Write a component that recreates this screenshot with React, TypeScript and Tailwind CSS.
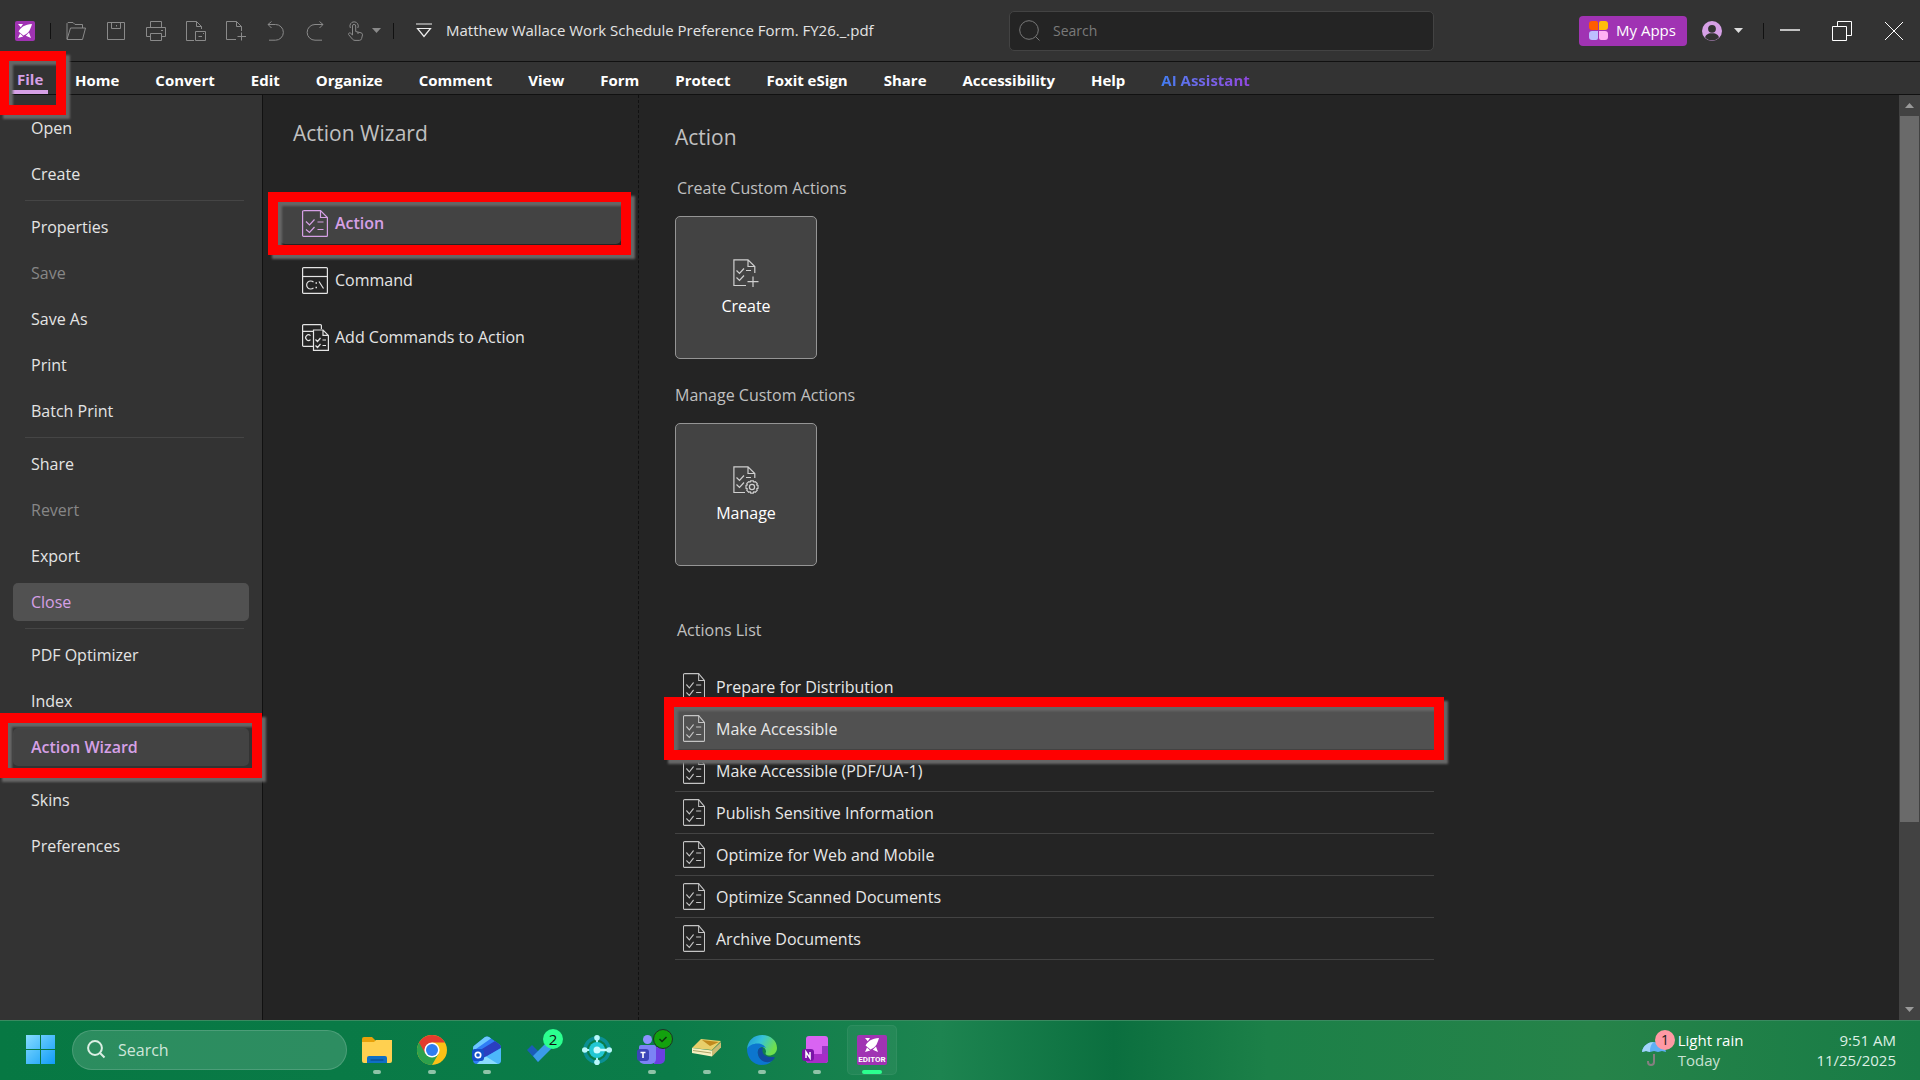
import type { ReactNode } from "react";
import clsx from "clsx";

type MenuItem = { label: string; disabled?: boolean; hovered?: boolean; active?: boolean };

const TABS = [
  "Home",
  "Convert",
  "Edit",
  "Organize",
  "Comment",
  "View",
  "Form",
  "Protect",
  "Foxit eSign",
  "Share",
  "Accessibility",
  "Help",
];

const FILE_MENU: MenuItem[][] = [
  [{ label: "Open" }, { label: "Create" }],
  [
    { label: "Properties" },
    { label: "Save", disabled: true },
    { label: "Save As" },
    { label: "Print" },
    { label: "Batch Print" },
  ],
  [
    { label: "Share" },
    { label: "Revert", disabled: true },
    { label: "Export" },
    { label: "Close", hovered: true },
  ],
  [{ label: "PDF Optimizer" }, { label: "Index" }, { label: "Action Wizard", active: true }],
  [{ label: "Skins" }, { label: "Preferences" }],
];

const ACTIONS = [
  "Prepare for Distribution",
  "Make Accessible",
  "Make Accessible (PDF/UA-1)",
  "Publish Sensitive Information",
  "Optimize for Web and Mobile",
  "Optimize Scanned Documents",
  "Archive Documents",
];

// Red callout frame laid over the thing it points at
function Callout({ className }: { className: string }) {
  return (
    <span
      aria-hidden
      className={clsx(
        "pointer-events-none absolute z-20 border-[10px] border-[#ff0000] drop-shadow-[4px_4px_1px_#666666]",
        className,
      )}
    />
  );
}

function Line({ w = 20, h = 20, sw = 1, className, children }: { w?: number; h?: number; sw?: number; className?: string; children: ReactNode }) {
  return (
    <svg width={w} height={h} viewBox={`0 0 ${w} ${h}`} fill="none" stroke="currentColor" strokeWidth={sw} className={clsx("shrink-0", className)}>
      {children}
    </svg>
  );
}

/* ---------- line icons ---------- */

function ChecklistIcon({ narrow }: { narrow?: boolean }) {
  return (
    <svg
      width={narrow ? 22 : 26}
      height="27"
      viewBox="0 0 26 27"
      preserveAspectRatio="none"
      fill="none"
      stroke="currentColor"
      strokeWidth="1.2"
      className="shrink-0"
    >
      <path d="M1.5 .6H18.5L25.4 7.5V25.4a1 1 0 0 1-1 1H1.6a1 1 0 0 1-1-1V1.6a1 1 0 0 1 1-1Z" />
      <path d="M18.5 .6V7.5H25.4" />
      <path d="M4 11.5 7.5 15 12.5 9.5M4 19.5 7.5 22.5 12.5 17M15.5 12H21.5M15.5 19.5H21.5" />
    </svg>
  );
}

function CommandIcon() {
  return (
    <Line w={26} h={27} sw={1.2}>
      <rect x=".6" y=".6" width="24.8" height="25.8" rx="1" />
      <path d="M.6 9.5H25.4" />
      <path d="M11.5 15.2A4 4 0 1 0 11.5 20.8M17 14.5 21.5 21.5" />
      <path d="M13.5 16H15M13.5 20.5H15" strokeWidth="1.6" />
    </Line>
  );
}

function AddCommandIcon() {
  return (
    <Line w={27} h={27} sw={1.2}>
      <path d="M11 22.4H1.6a1 1 0 0 1-1-1V1.6a1 1 0 0 1 1-1H18.4a1 1 0 0 1 1 1V5M.6 7.4H11" />
      <path d="M8.5 11.6A2.8 2.8 0 1 0 8.5 15.6" />
      <path d="M11.5 6H21L26.4 11.4V26.4H11.5ZM21 6V11.4H26.4" />
      <path d="M13.5 15.5 15.5 17.5 18.5 14M13.5 21.5 15.5 23.5 18.5 20M20.5 16H24M20.5 21.5H24" />
    </Line>
  );
}

function CreateActionIcon() {
  return (
    <Line w={26} h={28} sw={1.2}>
      <path d="M13 26.5H.9V.9H15L21.8 7.5V14M15 .9V7.5H21.8" />
      <path d="M3.5 11.5 6.5 14.5 11 9.5M3.5 18.5 6.5 21.5 11 16.5M13 11.5H18M20 17.5V28M14.5 22.7H25.5" />
    </Line>
  );
}

function ManageActionIcon() {
  return (
    <Line w={26} h={28} sw={1.2}>
      <path d="M12 26.5H.9V.9H15L21.8 7.5V12M15 .9V7.5H21.8" />
      <path d="M3.5 11.5 6.5 14.5 11 9.5M3.5 18.5 6.5 21.5 11 16.5M13 11.5H18" />
      <circle cx="19" cy="21" r="2.6" />
      <path d="M17.7 14.8h2.6l.6 1.3 1.4-.5 1.9 1.9-.5 1.4 1.3.6v2.8l-1.3.6.5 1.4-1.9 1.9-1.4-.5-.6 1.4h-2.6l-.6-1.4-1.4.5-1.9-1.9.5-1.4-1.3-.6v-2.8l1.3-.6-.5-1.4 1.9-1.9 1.4.5Z" />
    </Line>
  );
}

function Caret({ className }: { className?: string }) {
  return (
    <svg width="9" height="5" viewBox="0 0 9 5" className={clsx("shrink-0", className)}>
      <path d="M0 0H9L4.5 5Z" fill="currentColor" />
    </svg>
  );
}

function FoxitMark() {
  return (
    <>
      <path d="M17 3C10 3.4 5.4 6.4 3.6 10.6L8.4 14.5C12.6 13 15.3 9.6 17 3Z" fill="#fff" />
      <path d="M3 3H8L5.8 6.2ZM3 17 5 12.6 8.2 15.4ZM10.8 14.7 14 11.6 16 17Z" fill="#fff" />
    </>
  );
}

/* ---------- title bar ---------- */

const QUICK_TOOLS: { name: string; icon: ReactNode }[] = [
  {
    name: "Open file",
    icon: (
      <Line>
        <path d="M1 18V2.5L2 1.5H7L9 3.5H16.5V7M1 18.5 4.5 7H19.5L16.5 18.5Z" />
      </Line>
    ),
  },
  {
    name: "Save file",
    icon: (
      <Line>
        <path d="M1.5 1.5H18.5V18.5H1.5ZM5.5 1.5V7.5H14.5V1.5M10.5 4V5.5" />
      </Line>
    ),
  },
  {
    name: "Print file",
    icon: (
      <Line>
        <path d="M4.5 6V.5H15.5V6M4.5 15.5H.5V6.5H19.5V15.5H15.5M4.5 12.5H15.5V19.5H4.5ZM15 9.5H17" />
      </Line>
    ),
  },
  {
    name: "Page tools",
    icon: (
      <Line>
        <path d="M8 19.5H.5V.5H10.5L15.5 5.5V8M10.5 .5V5.5H15.5M9.5 10.5H19.5V19.5H9.5ZM12.5 15.5H16M17 12.5H18" />
      </Line>
    ),
  },
  {
    name: "New page",
    icon: (
      <Line>
        <path d="M10 18.5H.5V.5H10.5L15.5 5.5V10M10.5 .5V5.5H15.5M15.5 11.5V19.5M11.5 15.5H20" />
      </Line>
    ),
  },
  {
    name: "Undo",
    icon: (
      <Line>
        <path d="M5.5 .5 2 3.5 5.5 7M2 3.5H9.5A7.8 7.8 0 0 1 9.5 19.2H3" />
      </Line>
    ),
  },
  {
    name: "Redo",
    icon: (
      <Line>
        <path d="M13.5 .5 17 3.5 13.5 7M17 3.5H9A7.8 7.8 0 0 0 9 19.2H16" />
      </Line>
    ),
  },
];

function TitleBar() {
  return (
    <header className="flex h-[62px] items-center border-b border-[#111111] bg-[#333333]">
      <svg width="20" height="20" viewBox="0 0 20 20" className="ml-[15px] shrink-0">
        <rect width="20" height="20" rx="2" fill="#a033b3" />
        <FoxitMark />
      </svg>
      <span className="ml-[15px] h-4 w-px bg-[#111111]" />
      <div className="ml-[15px] flex items-center gap-5 text-[#8a8a8a]">
        {QUICK_TOOLS.map((tool) => (
          <button key={tool.name} aria-label={tool.name}>
            {tool.icon}
          </button>
        ))}
        <button aria-label="Hand tool" className="flex items-center gap-[6px]">
          <Line>
            <path d="M6.5 12V5a1.6 1.6 0 0 1 3.2 0V10.5L15 11.8a2 2 0 0 1 1.5 2L15.6 17.6a2.4 2.4 0 0 1-2.3 1.8H9a3 3 0 0 1-2.3-1L2.6 13.6C2 12.5 3.4 11.3 4.6 12.2L6.5 14Z" />
            <path d="M4.4 7A4.2 4.2 0 1 1 11.8 7M12 11V13" />
          </Line>
          <Caret />
        </button>
      </div>
      <span className="ml-3 h-4 w-px bg-[#111111]" />
      <button aria-label="Customize toolbar" className="ml-[22px] text-[#eeeeee]">
        <Line w={16} h={16} sw={1.2}>
          <path d="M0 1H16M1.5 5.5H14.5L8 13.5Z" />
        </Line>
      </button>
      <p className="ml-[14px] text-[15px] whitespace-nowrap text-[#e4e4e4]">
        Matthew Wallace Work Schedule Preference Form. FY26._.pdf
      </p>

      <label className="ml-auto flex h-10 w-[425px] items-center gap-[13px] rounded-[5px] border border-[#434343] bg-[#242424] pl-[9px] text-[#7a7a7a]">
        <Line w={21} h={21}>
          <circle cx="10" cy="10" r="9.3" />
          <path d="M16.5 16.5 20.5 20.5" />
        </Line>
        <input aria-label="Search" placeholder="Search" className="w-full bg-transparent text-[14px] outline-none placeholder:text-[#7a7a7a]" />
      </label>

      <button className="ml-[145px] flex h-[30px] w-[108px] items-center gap-2 rounded-[4px] bg-[#a033b3] pl-[10px] text-[15px] whitespace-nowrap text-white">
        <svg width="19" height="19" viewBox="0 0 19 19" className="shrink-0">
          <path d="M3 0H7a2 2 0 0 1 2 2V9H3A3 3 0 0 1 0 6V3a3 3 0 0 1 3-3Z" fill="#ff5c00" />
          <path d="M12 0h4a3 3 0 0 1 3 3V6a3 3 0 0 1-3 3H10V2a2 2 0 0 1 2-2Z" fill="#ffbd0a" />
          <path d="M3 10H9v7a2 2 0 0 1-2 2H3a3 3 0 0 1-3-3V13a3 3 0 0 1 3-3Z" fill="#bdbdff" />
          <path d="M10 10h6a3 3 0 0 1 3 3v3a3 3 0 0 1-3 3H12a2 2 0 0 1-2-2Z" fill="#ffb0f4" />
        </svg>
        My Apps
      </button>
      <button aria-label="Account" className="ml-[15px] flex items-center gap-3 text-[#dddddd]">
        <svg width="20" height="20" viewBox="0 0 20 20">
          <circle cx="10" cy="10" r="10" fill="#d6a0e6" />
          <circle cx="10" cy="7.8" r="3.9" fill="#333333" />
          <path d="M3 16.2C4.6 12.6 7 12.2 10 12.2S15.4 12.6 17 16.2A9.3 9.3 0 0 1 3 16.2Z" fill="#333333" />
        </svg>
        <Caret />
      </button>
      <span className="ml-5 h-4 w-px bg-[#111111]" />
      <div className="mr-4 ml-4 flex items-center gap-8 text-white">
        <button aria-label="Minimize">
          <Line sw={1.4}>
            <path d="M0 9H20" />
          </Line>
        </button>
        <button aria-label="Restore">
          <Line>
            <path d="M.5 5.5H14.5V19.5H.5ZM5.5 5V.5H19.5V14.5H15" />
          </Line>
        </button>
        <button aria-label="Close window">
          <Line>
            <path d="M1 1 19 19M19 1 1 19" />
          </Line>
        </button>
      </div>
    </header>
  );
}

function MenuBar() {
  return (
    <nav className="flex h-[33px] border-b border-[#111111] bg-[#333333] pt-[7px] pl-[10px] text-[15px] leading-[22px] font-bold whitespace-nowrap text-white">
      <div className="relative">
        <button className="block w-[38px] border-b-4 border-[#d6a0e6] pb-px text-left leading-[20px] text-[#d6a0e6]">
          <span className="pl-[7px]">File</span>
        </button>
        <Callout className="-top-[18px] -left-[11px] h-[64px] w-[67px]" />
      </div>
      <div className="ml-[27px] flex gap-9">
        {TABS.map((tab) => (
          <button key={tab} className="flex">
            {tab}
          </button>
        ))}
        <button className="flex bg-linear-to-r from-[#3f7df0] to-[#9146e0] bg-clip-text text-transparent">AI Assistant</button>
      </div>
    </nav>
  );
}

/* ---------- backstage ---------- */

function FileMenu() {
  return (
    <aside className="w-[263px] shrink-0 border-r border-[#111111] bg-[#333333] pt-[10px]">
      {FILE_MENU.map((group, i) => (
        <ul key={i}>
          {i > 0 && (
            <li aria-hidden className="mr-[18px] ml-[25px] py-[3px]">
              <div className="h-px bg-[#454545]" />
            </li>
          )}
          {group.map((item) => (
            <li key={item.label} className="relative px-[13px] py-1">
              <button
                disabled={item.disabled}
                className={clsx(
                  "h-[38px] w-full rounded-[5px] pl-[18px] text-left text-[16px]",
                  item.disabled && "text-[#878787]",
                  item.hovered && "bg-[#515151] text-[#d6a0e6]",
                  item.active && "bg-[#434343] font-semibold text-[#d6a0e6]",
                )}
              >
                {item.label}
              </button>
              {item.active && <Callout className="-top-[11px] right-0 -bottom-2 -left-[2px]" />}
            </li>
          ))}
        </ul>
      ))}
    </aside>
  );
}

function WizardNav() {
  return (
    <section className="w-[376px] shrink-0 border-r border-dashed border-[#111111] pt-[23px]">
      <h1 className="pl-[30px] text-[21px] leading-[30px] text-[#c0c0c0]">Action Wizard</h1>
      <ul className="mt-[54px] mr-[17px] ml-[17px] flex flex-col gap-[15px] text-[16px]">
        <li className="relative">
          <button className="flex h-[42px] w-full items-center gap-[7px] rounded-[5px] bg-[#434343] pl-[22px] font-semibold text-[#d6a0e6]">
            <ChecklistIcon />
            Action
          </button>
          <Callout className="-top-[10px] -right-[10px] -bottom-[11px] -left-3" />
        </li>
        <li>
          <button className="flex h-[42px] w-full items-center gap-[7px] pl-[22px]">
            <CommandIcon />
            Command
          </button>
        </li>
        <li>
          <button className="flex h-[42px] w-full items-center gap-[6px] pl-[22px]">
            <AddCommandIcon />
            Add Commands to Action
          </button>
        </li>
      </ul>
    </section>
  );
}

function Tile({ icon, label }: { icon: ReactNode; label: string }) {
  return (
    <button className="flex h-[143px] w-[142px] flex-col items-center justify-center gap-2 rounded-[5px] border border-[#959595] bg-[#434343] text-[16px] leading-[22px] text-white">
      <span className="text-[#cfcfcf]">{icon}</span>
      {label}
    </button>
  );
}

function ActionPanel() {
  return (
    <main className="min-w-0 flex-1 pt-[27px] pb-10 pl-9 text-[#c0c0c0]">
      <h2 className="text-[21px] leading-[30px]">Action</h2>
      <h3 className="mt-6 mb-4 pl-[2px] text-[16px] leading-6">Create Custom Actions</h3>
      <Tile icon={<CreateActionIcon />} label="Create" />
      <h3 className="mt-6 mb-4 text-[16px] leading-6">Manage Custom Actions</h3>
      <Tile icon={<ManageActionIcon />} label="Manage" />
      <h3 className="mt-[52px] pl-[2px] text-[16px] leading-6">Actions List</h3>
      <ul className="mt-6 w-[62%] text-[16px] text-[#e8e8e8]">
        {ACTIONS.map((name) => {
          const selected = name === "Make Accessible";
          return (
            <li key={name} className="relative">
              <button
                className={clsx(
                  "flex h-[42px] w-full items-center gap-[11px] border-b border-[#434343] pl-2",
                  selected && "bg-[#515151]",
                )}
              >
                <span className="text-[#c4c4c4]">
                  <ChecklistIcon narrow />
                </span>
                {name}
              </button>
              {selected && <Callout className="-top-[11px] -right-[10px] -bottom-[10px] -left-[11px]" />}
            </li>
          );
        })}
      </ul>
    </main>
  );
}

function ScrollRail() {
  return (
    <div className="flex w-[21px] shrink-0 flex-col bg-[#424242] text-[#9a9a9a]">
      <button aria-label="Scroll up" className="flex h-[21px] items-center justify-center">
        <Caret className="rotate-180" />
      </button>
      <div className="flex-1">
        <div className="mx-px h-[80%] bg-[#6a6a6a]" />
      </div>
      <button aria-label="Scroll down" className="flex h-[21px] items-center justify-center">
        <Caret />
      </button>
    </div>
  );
}

/* ---------- taskbar ---------- */

function AppButton({ name, running, active, children }: { name: string; running?: boolean; active?: boolean; children: ReactNode }) {
  return (
    <button aria-label={name} className="relative flex h-[57px] w-[55px] items-center justify-center">
      <span className={clsx("flex h-[50px] w-[50px] items-center justify-center rounded-[5px]", active && "border border-white/5 bg-white/5")}>
        <svg width="30" height="30" viewBox="0 0 30 30" className="overflow-visible">
          {children}
        </svg>
      </span>
      {running && <span className={clsx("absolute bottom-1 h-1 rounded-full", active ? "w-5 bg-[#2bff8f]" : "w-2 bg-[#8fc4a8]")} />}
    </button>
  );
}

function TaskApps() {
  return (
    <div className="flex pl-[2px]">
      <AppButton name="File Explorer" running>
        <path d="M0 4a2 2 0 0 1 2-2H10l4 4H28V10H0Z" fill="#e8a10a" />
        <path d="M0 7H12l2-2H30V26a2 2 0 0 1-2 2H2a2 2 0 0 1-2-2Z" fill="#ffd050" />
        <path d="M5 28V23a2 2 0 0 1 2-2H23a2 2 0 0 1 2 2V28Z" fill="#0f6fc5" />
        <path d="M8.5 25H21.5" stroke="#0a4a8c" strokeWidth="1.2" />
      </AppButton>
      <AppButton name="Chrome" running>
        <circle cx="15" cy="15" r="15" fill="#fbc116" />
        <path d="M15 15 2 7.5A15 15 0 0 0 15 30L21.5 18.7Z" fill="#2da14c" />
        <path d="M2 7.5A15 15 0 0 1 28 7.5H15L8.5 18.7Z" fill="#e33b2e" />
        <circle cx="15" cy="15" r="7.6" fill="#fff" />
        <circle cx="15" cy="15" r="6" fill="#2f7df0" />
      </AppButton>
      <AppButton name="Outlook" running>
        <path d="M1 13Q1 11 3 10L13 2Q15 .8 17 2L27 9Q29 10 29 13V25a4 4 0 0 1-4 4H5a4 4 0 0 1-4-4Z" fill="#2f7df5" />
        <path d="M1 13Q1 11 3 10L13 2Q15 .8 17 2L19 3.500 1 16Z" fill="#6cc8ff" />
        <path d="M5 17 23 6 27 9Q29 10 29 13L10 24Z" fill="#2a3fc0" />
        <path d="M10 24 29 13V25a4 4 0 0 1-4 4H5Z" fill="#4db8fa" />
        <path d="M10 24 14 21.500 26 29H5Z" fill="#8adcff" />
        <rect y="14" width="12" height="12" rx="3" fill="#1450c8" />
        <circle cx="6" cy="20" r="2.7" fill="none" stroke="#fff" strokeWidth="1.7" />
      </AppButton>
      <AppButton name="To Do">
        <path d="M0 15 5 10 16 21 11 27Z" fill="#1a5cb8" />
        <path d="M11 27 6 21 22 5 27 11Z" fill="#3b9bea" />
        <circle cx="26" cy="4" r="10" fill="#2bff8f" />
        <text x="26" y="9.500" fontSize="15" textAnchor="middle" fill="#101010">2</text>
      </AppButton>
      <AppButton name="Hub">
        <circle cx="15" cy="15" r="12" fill="none" stroke="#0b8f94" strokeWidth="3.5" />
        <path d="M15 3V27M3 15H27" stroke="#a9f3f5" strokeWidth="2" />
        <circle cx="15" cy="15" r="8" fill="#22c7d3" />
        <circle cx="15" cy="15" r="3.5" fill="#c8fbff" />
        <path d="M15 15H26" stroke="#c8fbff" strokeWidth="2.5" />
        <g fill="#b8f8fb">
          <circle cx="15" cy="2.8" r="2.8" />
          <circle cx="15" cy="27.2" r="2.8" />
          <circle cx="2.8" cy="15" r="2.8" />
          <circle cx="27.2" cy="15" r="2.8" />
        </g>
      </AppButton>
      <AppButton name="Teams" running>
        <circle cx="10.5" cy="4.5" r="4.5" fill="#8d92ff" />
        <path d="M17 12H28V24a5 5 0 0 1-5 5H17Z" fill="#6b3fe0" />
        <path d="M2 12a2 2 0 0 1 2-2H17a2 2 0 0 1 2 2V24a5 5 0 0 1-5 5H7a5 5 0 0 1-5-5Z" fill="#7b83f5" />
        <rect y="14" width="12" height="12" rx="3" fill="#3b45b8" />
        <path d="M3.5 17.5H8.5M6 17.5V23" stroke="#fff" strokeWidth="1.6" />
        <circle cx="26" cy="4" r="9.5" fill="#13a10e" stroke="#1d3325" />
        <path d="M22.5 4 25 6.5 29.5 2" fill="none" stroke="#0b3310" strokeWidth="1.5" />
      </AppButton>
      <AppButton name="Card scanner" running>
        <path d="M0 13 9 4 29 6 20 15Z" fill="#e8cf6a" />
        <path d="M10 5 27 7 18 11Z" fill="#c08a1e" />
        <path d="M0 13 20 15.5V21.5L0 18Z" fill="#f6efc0" />
        <path d="M20 15.5 29 7V12.5L20 21.5Z" fill="#c9ba74" />
        <path d="M1 15.5 19 18" stroke="#9c9152" strokeWidth=".8" />
      </AppButton>
      <AppButton name="Edge" running>
        <defs>
          <linearGradient id="edge-top" x1="0" y1="0" x2="1" y2="0.4">
            <stop offset="0" stopColor="#1b93d8" />
            <stop offset=".5" stopColor="#36c3d8" />
            <stop offset="1" stopColor="#6fdf4c" />
          </linearGradient>
        </defs>
        <path d="M0 14C1 5 7 0 15 0 24 0 30 6 30 13 30 18 26 20.5 22 20.5 18.5 20.5 18 18.5 19 17 19.5 11 9 8 0 14Z" fill="url(#edge-top)" />
        <path d="M0 14C3 8 15 6 19 13 14 10 10 14 11 19 12 24 18 28 25 26 22 29 18 30 15 30 6 30 0 23 0 14Z" fill="#0c76cf" />
        <path d="M11 19C10 14 13 12 16 13 14 17 17 23 26 22Q29 21.5 27 24C22 30 12 27 11 19Z" fill="#114a9e" />
      </AppButton>
      <AppButton name="OneNote" running>
        <rect x="4" y="1" width="22" height="27" rx="3" fill="#d964f2" />
        <path d="M20 11H26V20H20Z" fill="#9a35c4" />
        <path d="M4 19H26V25a3 3 0 0 1-3 3H7a3 3 0 0 1-3-3Z" fill="#a82cc9" />
        <rect y="14" width="12" height="12" rx="3" fill="#7a14a8" />
        <path d="M4 23V17L8 23V17" fill="none" stroke="#fff" strokeWidth="1.5" />
      </AppButton>
      <AppButton name="Foxit PDF Editor" running active>
        <rect width="30" height="30" rx="2" fill="#a033b3" />
        <g transform="translate(5 0)">
          <FoxitMark />
        </g>
        <text x="15" y="27" fontSize="8" fontWeight="700" textAnchor="middle" fill="#fff" className="font-['Roboto',sans-serif]">EDITOR</text>
      </AppButton>
    </div>
  );
}

function Taskbar() {
  return (
    <footer className="flex h-[60px] items-center border-t border-[#3a8a60] bg-[linear-gradient(90deg,#077843,#0b7c49_35%,#1d8450_49%,#0b6f3f_58%,#1c8048_66%,#268349_83%,#187c46)] pb-[2px]">
      <button aria-label="Start" className="ml-[26px]">
        <svg width="29" height="29" viewBox="0 0 29 29">
          <defs>
            <linearGradient id="start" x1="0" y1="0" x2="1" y2="1">
              <stop offset="0" stopColor="#86dcff" />
              <stop offset="1" stopColor="#109cf8" />
            </linearGradient>
          </defs>
          <path d="M0 0H14V14H0ZM15 0H29V14H15ZM0 15H14V29H0ZM15 15H29V29H15Z" fill="url(#start)" />
        </svg>
      </button>
      <label className="ml-[17px] flex h-10 w-[275px] items-center gap-3 rounded-full border border-white/15 bg-white/15 pl-[14px] text-[#dcefe4]">
        <Line w={19} h={19} sw={2}>
          <circle cx="8" cy="8" r="6.9" />
          <path d="M13 13 17.5 17.5" />
        </Line>
        <input aria-label="Search Windows" placeholder="Search" className="w-full bg-transparent text-[16px] outline-none placeholder:text-[#cfe6da]" />
      </label>
      <TaskApps />
      <button className="ml-auto flex items-center gap-[3px] text-left text-[15px] leading-5 text-white">
        <svg width="34" height="40" viewBox="0 0 34 40">
          <path d="M13 24V32a3 3 0 0 1-6 0V31" fill="none" stroke="#857f80" strokeWidth="2" />
          <path d="M1 22C2 15 8 12 13 12S24 15 25 22L21 21 17 22 13 21 9 22 5 21Z" fill="#5fb0f5" />
          <path d="M9 22C9 17 10 14 13 12 8 12 2 15 1 22L5 21Z" fill="#a4d4fb" />
          <circle cx="24" cy="10" r="10" fill="#ff99a4" />
          <text x="24" y="15" fontSize="14" textAnchor="middle" fill="#1a1a1a">1</text>
        </svg>
        <span>
          Light rain
          <span className="block text-[#c9e2d3]">Today</span>
        </span>
      </button>
      <button className="mr-6 ml-[73px] text-right text-[15px] leading-5 text-[#dcefe4]">
        <span className="block">9:51 AM</span>
        <span className="block">11/25/2025</span>
      </button>
    </footer>
  );
}

export default function App() {
  return (
    <div className="flex min-h-screen flex-col bg-[#242424] font-['Open_Sans','Noto_Sans',sans-serif] text-[#e4e4e4]">
      <TitleBar />
      <MenuBar />
      <div className="flex flex-1">
        <FileMenu />
        <WizardNav />
        <ActionPanel />
        <ScrollRail />
      </div>
      <Taskbar />
    </div>
  );
}
